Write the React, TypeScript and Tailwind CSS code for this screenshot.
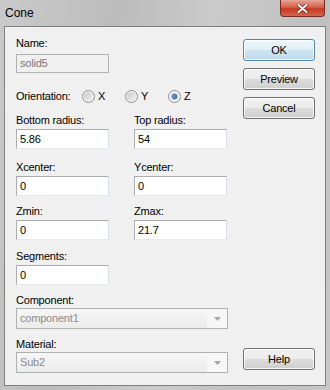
import React from "react";

const font = "[font-family:'Liberation_Sans',Arial,sans-serif] tracking-[-0.2px]";

function Field({ label, value }: { label: string; value: string }) {
  return (
    <div className="flex w-[93px] flex-col">
      <div className="h-[13px] text-[11px] leading-[13px] text-black">{label}</div>
      <div className="mt-[2px] h-[20px] border border-[#abadb3] border-r-[#dbdfe6] border-b-[#e3e9ef] bg-white px-[3px] text-[11px] leading-[18px] text-black">
        {value}
      </div>
    </div>
  );
}

function Radio({ label, checked }: { label: string; checked?: boolean }) {
  return (
    <div className="flex w-[43px] items-center gap-[3px]">
      <span className="flex h-[13px] w-[13px] items-center justify-center rounded-full border border-[#8e8f8f] bg-[#f4f4f4]">
        {checked ? (
          <span className="h-[7px] w-[7px] rounded-full border border-[#8cb8d8] bg-[radial-gradient(circle_at_40%_40%,#6a9cc8,#24507c)]" />
        ) : (
          <span className="h-[9px] w-[9px] rounded-full bg-[linear-gradient(135deg,#c6c9ce,#f3f3f3)]" />
        )}
      </span>
      <span className="text-[11px] leading-[13px] text-black">{label}</span>
    </div>
  );
}

function Combo({ value }: { value: string }) {
  return (
    <div className="mt-[1px] flex h-[21px] w-[212px] items-center border border-[#adb2b5] bg-[linear-gradient(#f6f6f6,#ececec)]">
      <span className="flex-1 px-[3px] text-[11px] leading-[13px] text-[#8a8a8a]">{value}</span>
      <span className="flex h-full w-[20px] items-center justify-center bg-[#f7f7f7]">
        <svg width="7" height="4" viewBox="0 0 7 4">
          <path d="M0 0h7L3.5 4z" fill="#a6a6a6" />
        </svg>
      </span>
    </div>
  );
}

function Button({ label, primary, className = "" }: { label: string; primary?: boolean; className?: string }) {
  return (
    <div
      className={
        "flex h-[22px] w-[72px] items-center justify-center rounded-[3px] border text-[11px] leading-[13px] text-black shadow-[inset_0_0_0_1px_rgba(255,255,255,0.8)] " +
        (primary
          ? "border-[#4f89b5] bg-[linear-gradient(#eef6fb_0%,#e0eef7_50%,#cfe4f1_51%,#bfd9ea_100%)] "
          : "border-[#707070] bg-[linear-gradient(#f2f2f2_0%,#ebebeb_50%,#dddddd_51%,#cfcfcf_100%)] ") +
        className
      }
    >
      {label}
    </div>
  );
}

export default function App() {
  return (
    <div className={`flex h-[390px] w-[330px] flex-col bg-[linear-gradient(100deg,#cacaca,#bcbcbc_30%,#cbcbcb_55%,#c0c0c0_80%,#c8c8c8)] ${font}`}>
      {/* title bar */}
      <div className="flex h-[26px] items-start">
        <span className="ml-[5px] mt-[6px] text-[12px] leading-[14px] tracking-normal text-black">Cone</span>
        <div className="ml-auto mr-[5px] flex h-[17px] w-[45px] items-center justify-center rounded-b-[4px] border border-t-0 border-[#7a2a20] bg-[linear-gradient(#e8a598,#d5604a_45%,#c5391f_55%,#d8654c)]">
          <svg width="11" height="9" viewBox="0 0 11 9">
            <path d="M1.5 1 9.5 8M9.5 1 1.5 8" stroke="#6b2418" strokeWidth="3.4" strokeLinecap="round" />
            <path d="M1.5 1 9.5 8M9.5 1 1.5 8" stroke="#ffffff" strokeWidth="2" strokeLinecap="round" />
          </svg>
        </div>
      </div>

      {/* client area */}
      <div className="mx-[4px] mb-[4px] flex flex-1 border border-[#7f7f7f] bg-[#f0f0f0]">
        <div className="box-content flex w-[212px] flex-col pl-[11px] pt-[10px]">
          <div className="h-[13px] text-[11px] leading-[13px] text-black">Name:</div>
          <div className="mt-[4px] h-[19px] w-[93px] border border-[#adb2b5] bg-[#f0f0f0] px-[3px] text-[11px] leading-[17px] text-[#7a7a7a]">
            solid5
          </div>

          <div className="mt-[15px] flex h-[16px] items-center">
            <span className="w-[66px] text-[11px] leading-[13px] text-black">Orientation:</span>
            <Radio label="X" />
            <Radio label="Y" />
            <Radio label="Z" checked />
          </div>

          <div className="mt-[10px] flex gap-[25px]">
            <Field label="Bottom radius:" value="5.86" />
            <Field label="Top radius:" value="54" />
          </div>
          <div className="mt-[12px] flex gap-[25px]">
            <Field label="Xcenter:" value="0" />
            <Field label="Ycenter:" value="0" />
          </div>
          <div className="mt-[9px] flex gap-[25px]">
            <Field label="Zmin:" value="0" />
            <Field label="Zmax:" value="21.7" />
          </div>
          <div className="mt-[10px] flex">
            <Field label="Segments:" value="0" />
          </div>

          <div className="mt-[9px] h-[13px] text-[11px] leading-[13px] text-black">Component:</div>
          <Combo value="component1" />
          <div className="mt-[9px] h-[13px] text-[11px] leading-[13px] text-black">Material:</div>
          <Combo value="Sub2" />
        </div>

        <div className="ml-[15px] flex w-[72px] flex-col pb-[15px] pt-[12px]">
          <Button label="OK" primary />
          <Button label="Preview" className="mt-[7px]" />
          <Button label="Cancel" className="mt-[7px]" />
          <Button label="Help" className="mt-auto" />
        </div>
      </div>
    </div>
  );
}
